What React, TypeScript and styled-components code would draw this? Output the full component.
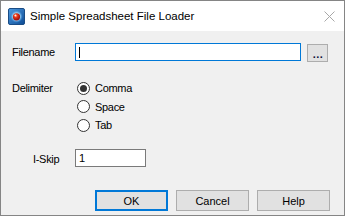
import styled, { createGlobalStyle } from 'styled-components';

const GlobalStyle = createGlobalStyle`
  html, body {
    margin: 0;
    padding: 0;
    background: #ffffff;
  }
  body {
    font-family: "Liberation Sans", Arial, sans-serif;
    color: #000;
  }
`;

const Window = styled.div`
  width: 345px;
  height: 216px;
  box-sizing: border-box;
  border: 1px solid #858585;
  background: #f0f0f0;
  display: flex;
  flex-direction: column;
`;

const TitleBar = styled.div`
  height: 30px;
  background: #ffffff;
  display: flex;
  align-items: center;
  padding-left: 7px;
`;

const Title = styled.span`
  margin-left: 5px;
  font-size: 11.5px;
  color: #000;
  white-space: nowrap;
`;

const CloseBox = styled.div`
  margin-left: auto;
  margin-right: 9px;
  width: 11px;
  height: 11px;
  display: flex;
`;

const Body = styled.div`
  flex: 1;
  padding: 12px 14px 0 11px;
  display: flex;
  flex-direction: column;
`;

const Row = styled.div<{ $gap?: number }>`
  display: flex;
  align-items: flex-start;
  margin-top: ${({ $gap }) => $gap ?? 0}px;
`;

const Label = styled.div<{ $indent?: number; $h?: number }>`
  width: 63px;
  box-sizing: border-box;
  padding-left: ${({ $indent }) => $indent ?? 0}px;
  height: ${({ $h }) => $h ?? 19}px;
  line-height: ${({ $h }) => $h ?? 19}px;
  font-size: 11px;
  letter-spacing: -0.3px;
  white-space: nowrap;
`;

const TextField = styled.div<{ $focused?: boolean; $width?: number }>`
  ${({ $width }) => ($width ? `width: ${$width}px;` : 'flex: 1;')}
  height: 18px;
  box-sizing: border-box;
  background: #ffffff;
  border: 1px solid ${({ $focused }) => ($focused ? '#0078d7' : '#7a7a7a')};
  display: flex;
  align-items: center;
  padding-left: 3px;
  font-size: 11px;
`;

const Caret = styled.span`
  width: 1px;
  height: 11px;
  background: #000;
`;

const BrowseButton = styled.div`
  margin-left: 6px;
  margin-right: 2px;
  margin-top: 1px;
  width: 21px;
  height: 18px;
  box-sizing: border-box;
  border: 1px solid #adadad;
  background: #e1e1e1;
  font-size: 11px;
  font-weight: bold;
  line-height: 19px;
  text-align: center;
  letter-spacing: 0.5px;
  padding-left: 1px;
  color: #10103a;
`;

const RadioGroup = styled.div`
  display: flex;
  flex-direction: column;
  padding-left: 2px;
`;

const RadioRow = styled.label`
  display: flex;
  align-items: center;
  height: 18.5px;
  font-size: 11px;
  letter-spacing: -0.3px;
`;

const RadioCircle = styled.span<{ $checked?: boolean }>`
  width: 13px;
  height: 13px;
  box-sizing: border-box;
  border-radius: 50%;
  border: 1px solid #333333;
  background: #ffffff;
  margin-right: 5px;
  display: flex;
  align-items: center;
  justify-content: center;

  &::after {
    content: '';
    width: 7px;
    height: 7px;
    border-radius: 50%;
    background: ${({ $checked }) => ($checked ? '#333333' : 'transparent')};
  }
`;

const ButtonRow = styled.div`
  margin-top: 21px;
  display: flex;
  justify-content: flex-end;
  gap: 8px;
`;

const Button = styled.div<{ $default?: boolean }>`
  width: 73px;
  height: 21px;
  box-sizing: border-box;
  background: #e1e1e1;
  border: ${({ $default }) => ($default ? '2px solid #0078d7' : '1px solid #adadad')};
  display: flex;
  align-items: center;
  justify-content: center;
  font-size: 11px;
`;

function AppIcon() {
  return (
    <svg width="17" height="17" viewBox="0 0 17 17">
      <defs>
        <linearGradient id="tile" x1="0" y1="0" x2="1" y2="1">
          <stop offset="0" stopColor="#4f9be0" />
          <stop offset="1" stopColor="#0b4a94" />
        </linearGradient>
        <radialGradient id="glow" cx="0.5" cy="0.5" r="0.5">
          <stop offset="0" stopColor="#fff2a0" />
          <stop offset="0.6" stopColor="#8cc8f0" />
          <stop offset="1" stopColor="#2f7fd0" stopOpacity="0" />
        </radialGradient>
        <radialGradient id="ball" cx="0.4" cy="0.35" r="0.6">
          <stop offset="0" stopColor="#ffc8a0" />
          <stop offset="0.35" stopColor="#ee3a1c" />
          <stop offset="1" stopColor="#9a0e0e" />
        </radialGradient>
      </defs>
      <rect x="0.5" y="0.5" width="16" height="16" rx="1.5" fill="url(#tile)" stroke="#1a4c85" />
      <circle cx="8.5" cy="8.5" r="6.5" fill="url(#glow)" />
      <circle cx="8.5" cy="8.8" r="3.6" fill="url(#ball)" />
      <circle cx="7.3" cy="7.4" r="0.9" fill="#ffffff" opacity="0.8" />
    </svg>
  );
}

function CloseIcon() {
  return (
    <svg width="11" height="11" viewBox="0 0 11 11">
      <path d="M0.5 0.5 L10.5 10.5 M10.5 0.5 L0.5 10.5" stroke="#a8a8a8" strokeWidth="1" />
    </svg>
  );
}

export default function App() {
  return (
    <>
      <GlobalStyle />
      <Window>
        <TitleBar>
          <AppIcon />
          <Title>Simple Spreadsheet File Loader</Title>
          <CloseBox>
            <CloseIcon />
          </CloseBox>
        </TitleBar>
        <Body>
          <Row>
            <Label>Filename</Label>
            <TextField $focused>
              <Caret />
            </TextField>
            <BrowseButton>...</BrowseButton>
          </Row>

          <Row $gap={17}>
            <Label $h={18.5}>Delimiter</Label>
            <RadioGroup>
              <RadioRow>
                <RadioCircle $checked />
                Comma
              </RadioRow>
              <RadioRow>
                <RadioCircle />
                Space
              </RadioRow>
              <RadioRow>
                <RadioCircle />
                Tab
              </RadioRow>
            </RadioGroup>
          </Row>

          <Row $gap={14.5}>
            <Label $indent={21} $h={20}>I-Skip</Label>
            <TextField $width={71}>1</TextField>
          </Row>

          <ButtonRow>
            <Button $default>OK</Button>
            <Button>Cancel</Button>
            <Button>Help</Button>
          </ButtonRow>
        </Body>
      </Window>
    </>
  );
}
